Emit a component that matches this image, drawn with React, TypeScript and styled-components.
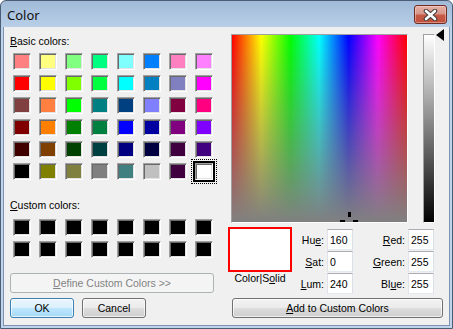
import React from "react";
import styled, { createGlobalStyle } from "styled-components";

const GlobalStyle = createGlobalStyle`
  html, body {
    margin: 0;
    padding: 0;
    background: #fff;
  }
`;

const BASIC_COLORS = [
  "#FF8080", "#FFFF80", "#80FF80", "#00FF80", "#80FFFF", "#0080FF", "#FF80C0", "#FF80FF",
  "#FF0000", "#FFFF00", "#80FF00", "#00FF40", "#00FFFF", "#0080C0", "#8080C0", "#FF00FF",
  "#804040", "#FF8040", "#00FF00", "#008080", "#004080", "#8080FF", "#800040", "#FF0080",
  "#800000", "#FF8000", "#008000", "#008040", "#0000FF", "#0000A0", "#800080", "#8000FF",
  "#400000", "#804000", "#004000", "#004040", "#000080", "#000040", "#400040", "#400080",
  "#000000", "#808000", "#808040", "#808080", "#408080", "#C0C0C0", "#400040", "#FFFFFF",
];
const SELECTED = 47;

const hsl = { hue: 160, sat: 0, lum: 240 };
const rgb = { red: 255, green: 255, blue: 255 };

const SPECTRUM_W = 175;
const SPECTRUM_H = 187;

const Window = styled.div`
  box-sizing: border-box;
  width: 453px;
  height: 329px;
  display: flex;
  flex-direction: column;
  border: 1px solid #4a5d75;
  border-radius: 6px 6px 0 0;
  padding: 0 2px 2px;
  background: linear-gradient(180deg, #a0bad7 0, #b9cfe8 26px, #bfd4eb 26px, #bfd4eb 100%);
  font-family: "Liberation Sans", Arial, sans-serif;
  font-size: 10.5px;
  color: #000;
`;

const TitleBar = styled.div`
  height: 26px;
  flex: none;
  display: flex;
  align-items: flex-start;
  justify-content: space-between;
  padding: 4px 3px 0 4px;
  box-sizing: border-box;
`;

const Title = styled.div`
  margin-top: 1px;
  font-family: "Noto Sans", "Open Sans", sans-serif;
  font-size: 13px;
  line-height: 18px;
  color: #111;
`;

const CloseButton = styled.div`
  box-sizing: border-box;
  width: 33px;
  height: 19px;
  display: flex;
  align-items: center;
  justify-content: center;
  border: 1px solid #6b2d24;
  border-radius: 3px;
  background: linear-gradient(180deg, #e7b1a5 0%, #d8968a 45%, #c75a45 55%, #c04f3a 100%);
  box-shadow: inset 0 0 0 1px rgba(255, 220, 210, 0.45);
`;

const Client = styled.div`
  flex: 1;
  display: flex;
  gap: 14px;
  padding: 7px 0 0 6px;
  border: 1px solid #7b93b1;
  border-top: none;
  background: #f0f0f0;
`;

const LeftPane = styled.div`
  width: 204px;
  display: flex;
  flex-direction: column;
`;

const Label = styled.div<{ $top: number }>`
  margin-top: ${(p) => p.$top}px;
  line-height: 13px;
  white-space: nowrap;
`;

const Key = styled.span`
  text-decoration: underline;
`;

const SwatchGrid = styled.div<{ $top: number }>`
  display: grid;
  grid-template-columns: repeat(8, 18px);
  grid-auto-rows: 17px;
  column-gap: 8px;
  row-gap: 5px;
  margin: ${(p) => p.$top}px 0 0 3px;
`;

const Swatch = styled.div<{ $color: string; $selected?: boolean }>`
  box-sizing: border-box;
  background: ${(p) => p.$color};
  border: 1px solid;
  border-color: #a0a0a0 #fff #fff #a0a0a0;
  box-shadow: inset 1px 1px 0 #696969, inset -1px -1px 0 #e3e3e3
    ${(p) => (p.$selected ? ", 0 0 0 2px #000" : "")};
  outline: ${(p) => (p.$selected ? "1px dotted #000" : "none")};
  outline-offset: 3px;
`;

const Button = styled.button<{ $variant?: "default" | "disabled" }>`
  box-sizing: border-box;
  height: 20px;
  padding: 0;
  font-family: inherit;
  font-size: 10.5px;
  line-height: 18px;
  color: ${(p) => (p.$variant === "disabled" ? "#838383" : "#000")};
  border: 1px solid
    ${(p) => (p.$variant === "default" ? "#3c7fb1" : p.$variant === "disabled" ? "#adb2b5" : "#707070")};
  border-radius: 3px;
  background: ${(p) =>
    p.$variant === "default"
      ? "linear-gradient(180deg, #eaf6fd 0%, #d9f0fc 50%, #bee6fd 50%, #a7d9f5 100%)"
      : p.$variant === "disabled"
      ? "#f4f4f4"
      : "linear-gradient(180deg, #f2f2f2 0%, #ebebeb 50%, #dddddd 50%, #cfcfcf 100%)"};
  box-shadow: ${(p) => (p.$variant === "disabled" ? "none" : "inset 0 0 0 1px rgba(255,255,255,0.7)")};
`;

const DefineButton = styled(Button)`
  width: 204px;
  margin-top: 15px;
`;

const ButtonRow = styled.div`
  display: flex;
  gap: 8px;
  margin-top: 5px;
`;

const DialogButton = styled(Button)`
  width: 64px;
`;

const RightPane = styled.div`
  width: 221px;
  display: flex;
  flex-direction: column;
`;

const PickerRow = styled.div`
  display: flex;
  gap: 15px;
  padding-left: 3px;
`;

const Spectrum = styled.div`
  position: relative;
  overflow: hidden;
  width: ${SPECTRUM_W}px;
  height: ${SPECTRUM_H}px;
  border: 1px solid;
  border-color: #a0a0a0 #fff #fff #a0a0a0;
  background: linear-gradient(180deg, rgba(128, 128, 128, 0) 0%, #808080 100%),
    linear-gradient(90deg, #f00 0%, #ff0 16.67%, #0f0 33.33%, #0ff 50%, #00f 66.67%, #f0f 83.33%, #f00 100%);
`;

const Crosshair = styled.div`
  position: absolute;
  width: 0;
  height: 0;
`;

const CrossPiece = styled.div<{ $x: number; $y: number; $w: number; $h: number }>`
  position: absolute;
  left: ${(p) => p.$x}px;
  top: ${(p) => p.$y}px;
  width: ${(p) => p.$w}px;
  height: ${(p) => p.$h}px;
  background: #000;
`;

const LumTrack = styled.div`
  position: relative;
  width: 22px;
`;

const LumBar = styled.div`
  width: 10px;
  height: ${SPECTRUM_H}px;
  border: 1px solid;
  border-color: #a0a0a0 #fff #fff #a0a0a0;
  background: linear-gradient(180deg, #fff 0%, #808080 50%, #000 100%);
`;

const LumArrow = styled.div`
  position: absolute;
  left: 13px;
  width: 0;
  height: 0;
  border-top: 6.5px solid transparent;
  border-bottom: 6.5px solid transparent;
  border-right: 8px solid #000;
`;

const ValuesRow = styled.div`
  display: flex;
  align-items: flex-start;
  margin-top: 4px;
`;

const PreviewCol = styled.div`
  width: 64px;
  display: flex;
  flex-direction: column;
  align-items: center;
`;

const PreviewBox = styled.div<{ $color: string }>`
  box-sizing: border-box;
  width: 64px;
  height: 45px;
  border: 2px solid #ff0000;
  background: ${(p) => p.$color};
`;

const PreviewLabel = styled.div`
  line-height: 13px;
  white-space: nowrap;
`;

const FieldsGrid = styled.div`
  display: grid;
  grid-template-columns: 35px 26px 55px 26px;
  grid-auto-rows: 21px;
  row-gap: 1px;
  margin-top: 2px;
`;

const FieldLabel = styled.div`
  display: flex;
  align-items: center;
  justify-content: flex-end;
  padding-right: 3px;
  white-space: nowrap;
`;

const FieldInput = styled.input`
  box-sizing: border-box;
  width: 26px;
  height: 21px;
  margin: 0;
  padding: 0 2px;
  font-family: inherit;
  font-size: 10.5px;
  color: #000;
  background: #fff;
  border: 1px solid;
  border-color: #abadb3 #dbdfe6 #e3e9ef #e2e3ea;
  outline: none;
`;

const AddButton = styled(Button)`
  width: 211px;
  margin: 4px 0 0 4px;
`;

function CloseGlyph() {
  return (
    <svg width="15" height="12" viewBox="0 0 15 12">
      <path d="M3 2 L12 10 M12 2 L3 10" stroke="#3d3d3d" strokeWidth="4.6" strokeLinecap="round" />
      <path d="M3 2 L12 10 M12 2 L3 10" stroke="#fff" strokeWidth="2.6" strokeLinecap="round" />
    </svg>
  );
}

export default function App() {
  const cx = (hsl.hue / 240) * SPECTRUM_W;
  const cy = (1 - hsl.sat / 240) * SPECTRUM_H - 1;
  const arrowTop = 1 + (1 - hsl.lum / 240) * SPECTRUM_H - 6.5;

  return (
    <>
      <GlobalStyle />
      <Window>
        <TitleBar>
          <Title>Color</Title>
          <CloseButton>
            <CloseGlyph />
          </CloseButton>
        </TitleBar>
        <Client>
          <LeftPane>
            <Label $top={1}>
              <Key>B</Key>asic colors:
            </Label>
            <SwatchGrid $top={5}>
              {BASIC_COLORS.map((c, i) => (
                <Swatch key={i} $color={c} $selected={i === SELECTED} />
              ))}
            </SwatchGrid>
            <Label $top={19}>
              <Key>C</Key>ustom colors:
            </Label>
            <SwatchGrid $top={7}>
              {Array.from({ length: 16 }).map((_, i) => (
                <Swatch key={i} $color="#000" />
              ))}
            </SwatchGrid>
            <DefineButton $variant="disabled">
              <Key>D</Key>efine Custom Colors &gt;&gt;
            </DefineButton>
            <ButtonRow>
              <DialogButton $variant="default">OK</DialogButton>
              <DialogButton>Cancel</DialogButton>
            </ButtonRow>
          </LeftPane>
          <RightPane>
            <PickerRow>
              <Spectrum>
                <Crosshair style={{ left: cx, top: cy }}>
                  <CrossPiece $x={-1} $y={-9} $w={3} $h={5} />
                  <CrossPiece $x={-9} $y={-1} $w={5} $h={3} />
                  <CrossPiece $x={4} $y={-1} $w={5} $h={3} />
                  <CrossPiece $x={-1} $y={4} $w={3} $h={5} />
                </Crosshair>
              </Spectrum>
              <LumTrack>
                <LumBar />
                <LumArrow style={{ top: arrowTop }} />
              </LumTrack>
            </PickerRow>
            <ValuesRow>
              <PreviewCol>
                <PreviewBox $color="#fff" />
                <PreviewLabel>
                  Color|S<Key>o</Key>lid
                </PreviewLabel>
              </PreviewCol>
              <FieldsGrid>
                <FieldLabel>
                  Hu<Key>e</Key>:
                </FieldLabel>
                <FieldInput readOnly value={hsl.hue} />
                <FieldLabel>
                  <Key>R</Key>ed:
                </FieldLabel>
                <FieldInput readOnly value={rgb.red} />
                <FieldLabel>
                  <Key>S</Key>at:
                </FieldLabel>
                <FieldInput readOnly value={hsl.sat} />
                <FieldLabel>
                  <Key>G</Key>reen:
                </FieldLabel>
                <FieldInput readOnly value={rgb.green} />
                <FieldLabel>
                  <Key>L</Key>um:
                </FieldLabel>
                <FieldInput readOnly value={hsl.lum} />
                <FieldLabel>
                  Bl<Key>u</Key>e:
                </FieldLabel>
                <FieldInput readOnly value={rgb.blue} />
              </FieldsGrid>
            </ValuesRow>
            <AddButton>
              <Key>A</Key>dd to Custom Colors
            </AddButton>
          </RightPane>
        </Client>
      </Window>
    </>
  );
}
